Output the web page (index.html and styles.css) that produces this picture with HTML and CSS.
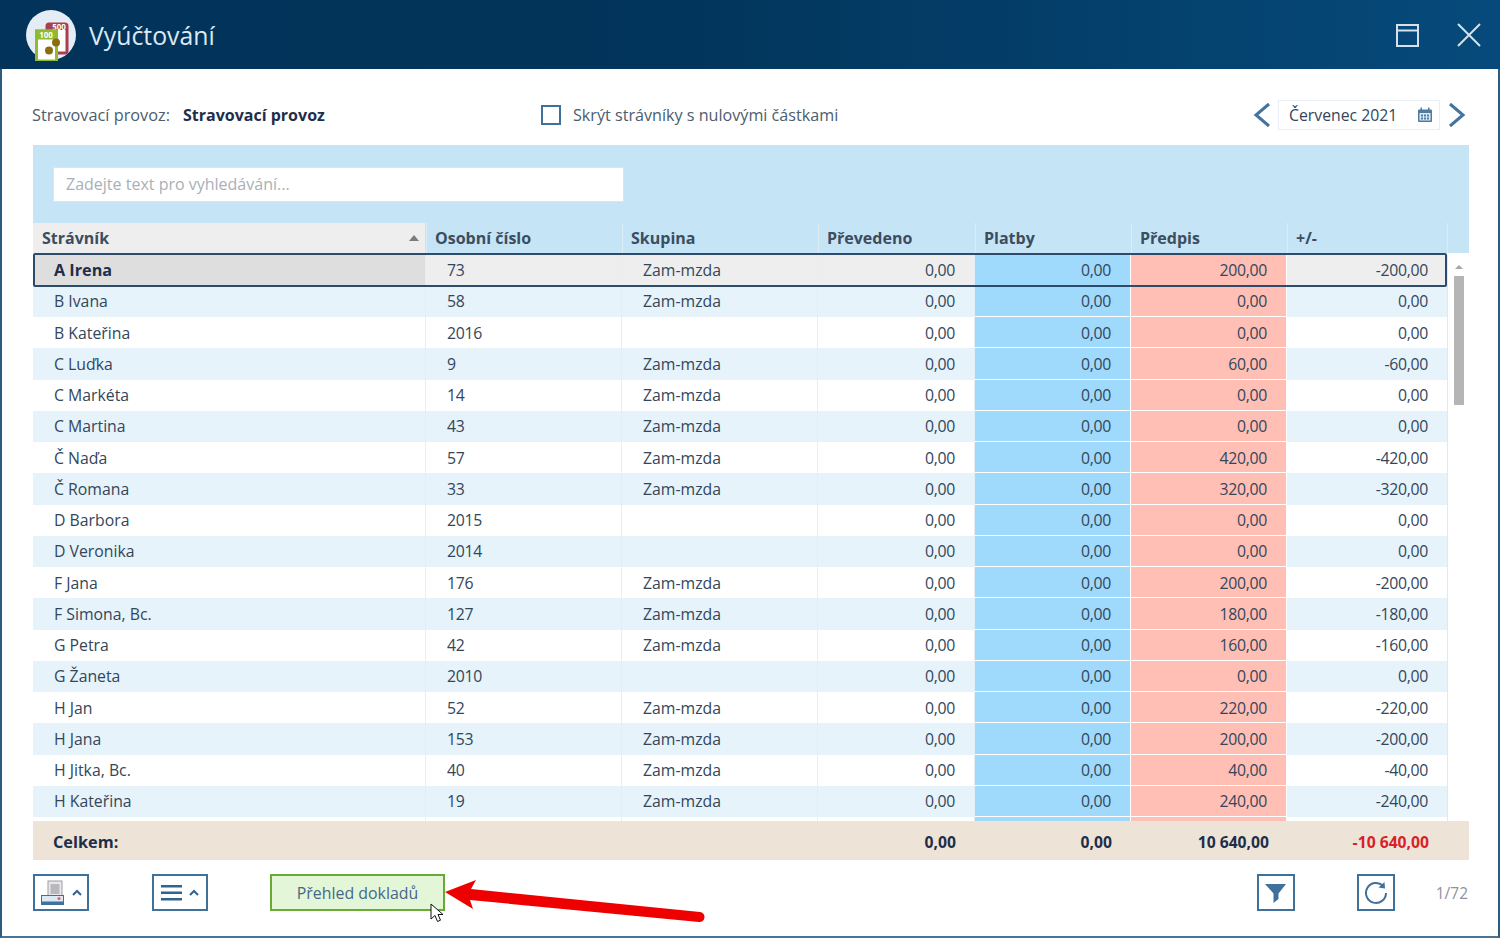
FILE: index.html
```html
<!DOCTYPE html>
<html lang="cs">
<head>
<meta charset="utf-8">
<title>Vyúčtování</title>
<link rel="stylesheet" href="styles.css">
</head>
<body>
<div class="window">
  <header class="titlebar">
    <svg class="logo" width="52" height="52" viewBox="0 0 52 52">
      <circle cx="26" cy="26" r="25" fill="#e4edf5"/>
      <rect x="22" y="15" width="20" height="29" rx="2" fill="#fff" stroke="#a83e4e" stroke-width="3"/>
      <rect x="22" y="14" width="20" height="7" fill="#a83e4e"/>
      <text x="34" y="20.500" class="logo-text">500</text>
      <rect x="11.500" y="22" width="20" height="30" fill="#fff" stroke="#8fbb2e" stroke-width="3"/>
      <rect x="10" y="20.500" width="23" height="10" fill="#8fbb2e"/>
      <text x="21" y="29" class="logo-text">100</text>
      <circle cx="31" cy="33.500" r="4" fill="#8a6d12"/>
      <circle cx="24" cy="41.500" r="4" fill="#8a6d12"/>
    </svg>
    <h1 class="title">Vyúčtování</h1>
    <div class="win-controls">
      <svg width="24" height="24" viewBox="0 0 24 24" fill="none" stroke="#d5e2ec" stroke-width="2"><rect x="2" y="2" width="21" height="21"/><path d="M2 7.500h21"/></svg>
      <svg width="26" height="26" viewBox="0 0 26 26" fill="none" stroke="#d5e2ec" stroke-width="2"><path d="M2 2l22 22M24 2L2 24"/></svg>
    </div>
  </header>

  <main class="content">
    <div class="toolbar">
      <div class="provoz"><span class="provoz-label">Stravovací provoz:</span><strong class="provoz-value">Stravovací provoz</strong></div>
      <label class="hide-zero"><span class="checkbox"></span>Skrýt strávníky s nulovými částkami</label>
      <div class="month">
        <svg width="18" height="26" viewBox="0 0 18 26" fill="none" stroke="#44749e" stroke-width="3"><path d="M16 2L3 13l13 11"/></svg>
        <div class="month-box">Červenec 2021
          <svg class="cal" width="16" height="16" viewBox="0 0 16 16"><rect x="1" y="2.500" width="14" height="12.500" rx="1" fill="#4d7ba3"/><rect x="3.500" y="0.500" width="1.500" height="3" fill="#4d7ba3"/><rect x="11" y="0.500" width="1.500" height="3" fill="#4d7ba3"/><rect x="2.500" y="6" width="11" height="7.500" fill="#dfe9f2"/><path d="M4 7.500h2v2H4zM7 7.500h2v2H7zM10 7.500h2v2h-2zM4 10.500h2v2H4zM7 10.500h2v2H7zM10 10.500h2v2h-2z" fill="#4d7ba3"/></svg>
        </div>
        <svg width="18" height="26" viewBox="0 0 18 26" fill="none" stroke="#44749e" stroke-width="3"><path d="M2 2l13 11L2 24"/></svg>
      </div>
    </div>

    <section class="panel">
      <div class="search-area"><input class="search" type="text" placeholder="Zadejte text pro vyhledávání..."></div>
      <div class="row head">
        <div class="hcell first">Strávník<span class="sort"></span></div>
        <div class="hcell">Osobní číslo</div>
        <div class="hcell">Skupina</div>
        <div class="hcell">Převedeno</div>
        <div class="hcell">Platby</div>
        <div class="hcell">Předpis</div>
        <div class="hcell">+/-</div>
        <div class="hcell last"></div>
      </div>
      <div class="body">
        <div class="rows">
          <div class="row selected"><div class="c name">A Irena</div><div class="c">73</div><div class="c">Zam-mzda</div><div class="c num">0,00</div><div class="c num pay">0,00</div><div class="c num due">200,00</div><div class="c num">-200,00</div></div>
          <div class="row"><div class="c name">B Ivana</div><div class="c">58</div><div class="c">Zam-mzda</div><div class="c num">0,00</div><div class="c num pay">0,00</div><div class="c num due">0,00</div><div class="c num">0,00</div></div>
          <div class="row"><div class="c name">B Kateřina</div><div class="c">2016</div><div class="c"></div><div class="c num">0,00</div><div class="c num pay">0,00</div><div class="c num due">0,00</div><div class="c num">0,00</div></div>
          <div class="row"><div class="c name">C Luďka</div><div class="c">9</div><div class="c">Zam-mzda</div><div class="c num">0,00</div><div class="c num pay">0,00</div><div class="c num due">60,00</div><div class="c num">-60,00</div></div>
          <div class="row"><div class="c name">C Markéta</div><div class="c">14</div><div class="c">Zam-mzda</div><div class="c num">0,00</div><div class="c num pay">0,00</div><div class="c num due">0,00</div><div class="c num">0,00</div></div>
          <div class="row"><div class="c name">C Martina</div><div class="c">43</div><div class="c">Zam-mzda</div><div class="c num">0,00</div><div class="c num pay">0,00</div><div class="c num due">0,00</div><div class="c num">0,00</div></div>
          <div class="row"><div class="c name">Č Naďa</div><div class="c">57</div><div class="c">Zam-mzda</div><div class="c num">0,00</div><div class="c num pay">0,00</div><div class="c num due">420,00</div><div class="c num">-420,00</div></div>
          <div class="row"><div class="c name">Č Romana</div><div class="c">33</div><div class="c">Zam-mzda</div><div class="c num">0,00</div><div class="c num pay">0,00</div><div class="c num due">320,00</div><div class="c num">-320,00</div></div>
          <div class="row"><div class="c name">D Barbora</div><div class="c">2015</div><div class="c"></div><div class="c num">0,00</div><div class="c num pay">0,00</div><div class="c num due">0,00</div><div class="c num">0,00</div></div>
          <div class="row"><div class="c name">D Veronika</div><div class="c">2014</div><div class="c"></div><div class="c num">0,00</div><div class="c num pay">0,00</div><div class="c num due">0,00</div><div class="c num">0,00</div></div>
          <div class="row"><div class="c name">F Jana</div><div class="c">176</div><div class="c">Zam-mzda</div><div class="c num">0,00</div><div class="c num pay">0,00</div><div class="c num due">200,00</div><div class="c num">-200,00</div></div>
          <div class="row"><div class="c name">F Simona, Bc.</div><div class="c">127</div><div class="c">Zam-mzda</div><div class="c num">0,00</div><div class="c num pay">0,00</div><div class="c num due">180,00</div><div class="c num">-180,00</div></div>
          <div class="row"><div class="c name">G Petra</div><div class="c">42</div><div class="c">Zam-mzda</div><div class="c num">0,00</div><div class="c num pay">0,00</div><div class="c num due">160,00</div><div class="c num">-160,00</div></div>
          <div class="row"><div class="c name">G Žaneta</div><div class="c">2010</div><div class="c"></div><div class="c num">0,00</div><div class="c num pay">0,00</div><div class="c num due">0,00</div><div class="c num">0,00</div></div>
          <div class="row"><div class="c name">H Jan</div><div class="c">52</div><div class="c">Zam-mzda</div><div class="c num">0,00</div><div class="c num pay">0,00</div><div class="c num due">220,00</div><div class="c num">-220,00</div></div>
          <div class="row"><div class="c name">H Jana</div><div class="c">153</div><div class="c">Zam-mzda</div><div class="c num">0,00</div><div class="c num pay">0,00</div><div class="c num due">200,00</div><div class="c num">-200,00</div></div>
          <div class="row"><div class="c name">H Jitka, Bc.</div><div class="c">40</div><div class="c">Zam-mzda</div><div class="c num">0,00</div><div class="c num pay">0,00</div><div class="c num due">40,00</div><div class="c num">-40,00</div></div>
          <div class="row"><div class="c name">H Kateřina</div><div class="c">19</div><div class="c">Zam-mzda</div><div class="c num">0,00</div><div class="c num pay">0,00</div><div class="c num due">240,00</div><div class="c num">-240,00</div></div>
          <div class="row"><div class="c name"></div><div class="c"></div><div class="c"></div><div class="c num"></div><div class="c num pay"></div><div class="c num due"></div><div class="c num"></div></div>
        </div>
        <div class="scrollbar"><span class="arrow-up"></span><span class="thumb"></span><span class="arrow-down"></span></div>
      </div>
      <div class="row totals">
        <div class="t total-label">Celkem:</div><div class="t"></div><div class="t"></div>
        <div class="t num tight">0,00</div><div class="t num tight">0,00</div><div class="t num">10 640,00</div><div class="t num neg">-10 640,00</div><div class="t"></div>
      </div>
    </section>

    <footer class="actions">
      <button class="icon-btn wide">
        <svg width="26" height="26" viewBox="0 0 26 26"><rect x="8" y="1" width="14" height="16" fill="#e8e8ea" stroke="#9c9ea4"/><rect x="10.500" y="4" width="9" height="10" fill="#b9b9bd"/><rect x="1.500" y="15.500" width="22" height="9" fill="#dbe9f4" stroke="#3f719b"/><rect x="1" y="21.500" width="23" height="3" fill="#3f719b"/><circle cx="19" cy="18.500" r="1.500" fill="#ef5b6b"/></svg>
        <svg width="10" height="7" viewBox="0 0 10 7" fill="none" stroke="#2f6390" stroke-width="2"><path d="M1 6l4-4 4 4"/></svg>
      </button>
      <button class="icon-btn wide">
        <svg width="22" height="18" viewBox="0 0 22 18" fill="#2f6390"><rect y="1" width="21" height="2.500"/><rect y="7.500" width="21" height="2.500"/><rect y="14" width="21" height="2.500"/></svg>
        <svg width="10" height="7" viewBox="0 0 10 7" fill="none" stroke="#2f6390" stroke-width="2"><path d="M1 6l4-4 4 4"/></svg>
      </button>
      <button class="green-btn">Přehled dokladů</button>
      <div class="spacer"></div>
      <button class="icon-btn">
        <svg width="22" height="22" viewBox="0 0 22 22" fill="#3f719b"><path d="M0 2h21l-7.500 9.500V17l-5 4V11.500z"/></svg>
      </button>
      <button class="icon-btn refresh">
        <svg width="24" height="24" viewBox="0 0 24 24" fill="none" stroke="#3f719b" stroke-width="2"><path d="M19 4.800A10 10 0 1 0 22 12"/><path d="M14.500 6.500L21 7.500 20.500 1z" fill="#3f719b" stroke="none"/></svg>
      </button>
      <span class="pager">1/72</span>
    </footer>
  </main>

  <svg class="pointer-arrow" width="280" height="60" viewBox="0 0 280 60">
    <path d="M1 22L32 10 27 19 256 42a5 5 0 0 1-1 10L26 30 29 39z" fill="#ee0000"/>
  </svg>
  <svg class="cursor" width="14" height="20" viewBox="0 0 14 20">
    <path d="M1 1v15l4-3.500 2.500 6 3-1.300-2.500-5.700h5z" fill="#fff" stroke="#111" stroke-width="1"/>
  </svg>
</div>
</body>
</html>
```
FILE: styles.css
```css
* { box-sizing: border-box; }
html, body { margin: 0; padding: 0; }
body {
  width: 1500px;
  height: 938px;
  overflow: hidden;
  background: #fff;
  font-family: "Open Sans", "Liberation Sans", sans-serif;
  font-size: 15.800px;
  color: #2c3e50;
}
.window {
  position: relative;
  width: 1500px;
  height: 938px;
  display: flex;
  flex-direction: column;
  border-left: 2px solid #2c5b80;
  border-right: 2px solid #2c5b80;
  border-bottom: 2px solid #4b7391;
}
.titlebar {
  height: 69px;
  margin: 0 -2px;
  flex: none;
  display: flex;
  align-items: center;
  padding: 0 18px 0 25px;
  background: linear-gradient(90deg, #02335a 0%, #02355b 45%, #064a7b 100%);
}
.logo { flex: none; }
.logo-text { font: 700 8px "Open Sans", sans-serif; fill: #fff; text-anchor: middle; }
.title {
  margin: 0 0 0 12px;
  font-size: 24.800px;
  font-weight: 400;
  color: #dce9f3;
}
.win-controls {
  margin-left: auto;
  display: flex;
  align-items: center;
  gap: 37px;
}
.content {
  flex: 1;
  min-height: 0;
  display: flex;
  flex-direction: column;
  padding: 0 29px 0 31px;
}
.toolbar {
  height: 76px;
  flex: none;
  display: flex;
  align-items: center;
  padding-top: 16px;
  position: relative;
}
.provoz { width: 508px; display: flex; flex: none; }
.provoz-label { width: 150px; font-size: 16.300px; color: #4c5d6d; margin-left: -1px; margin-right: 1px; }
.provoz-value { font-size: 16px; font-weight: 700; color: #1e2e4a; }
.hide-zero { display: flex; align-items: center; font-size: 16.150px; color: #4c5d6d; }
.checkbox {
  width: 20px;
  height: 20px;
  margin-right: 12px;
  border: 2px solid #3f719b;
  background: #fff;
}
.month { margin-left: auto; display: flex; align-items: center; gap: 7px; padding-right: 3px; }
.month-box {
  width: 162px;
  height: 30px;
  margin-right: 1px;
  display: flex;
  align-items: center;
  justify-content: space-between;
  padding: 0 6px 0 10px;
  border: 1px solid #e8eff6;
  color: #33465a;
}
.panel { width: 1436px; flex: none; background: #fff; }
.search-area { height: 78px; padding: 22px 20px; background: #c5e4f6; }
.search {
  display: block;
  width: 571px;
  height: 35px;
  padding: 0 12px 2px;
  border: 1px solid #d9e6ef;
  background: #fff;
  font: 16px "Open Sans", sans-serif;
  outline: none;
}
.search::placeholder { color: #a9b0b6; opacity: 1; }
.row {
  display: grid;
  grid-template-columns: 393px 196px 196px 157px 156px 156px 160px 22px;
}
.head { height: 30px; background: #c5e4f6; }
.hcell {
  display: flex;
  align-items: center;
  padding: 0 8px;
  font-weight: 700;
  font-size: 16px;
  color: #3b4d5f;
  border-left: 1px solid #dcecf7;
}
.hcell.first {
  position: relative;
  padding: 0 6px 0 9px;
  background: #eeeeee;
  border-left: 0;
  border-right: 1px solid #c5e4f6;
  justify-content: space-between;
}
.sort {
  width: 0;
  height: 0;
  border-left: 5px solid transparent;
  border-right: 5px solid transparent;
  border-bottom: 6px solid #7b7b7b;
}
.body { height: 568px; padding-top: 1.500px; display: grid; grid-template-columns: 1414px 22px; overflow: hidden; }
.rows { width: 1414px; }
.rows .row { grid-template-columns: 393px 196px 196px 157px 156px 156px 160px; height: 31.250px; }
.rows .row:nth-child(even) { background: #e6f3fb; }
.c {
  display: flex;
  align-items: center;
  padding: 0 0 0 21px;
  border-right: 1px solid #e3eef5;
  color: #33465a;
  white-space: nowrap;
}
.rows .row .c:last-child { border-right: 0; }
.rows .row .c:nth-child(2) { letter-spacing: -0.300px; }
.num { justify-content: flex-end; padding: 0 19px 0 0; letter-spacing: -0.300px; }
.pay { background: #9fd9fb; border-right-color: #fff; box-shadow: inset 0 -1px #fff; }
.due { background: #ffbfb5; border-right-color: #fff; box-shadow: inset 0 -1px #fff; }
.row.selected {
  position: relative;
  background: #eeeeee;
  z-index: 1;
}
.row.selected::after {
  content: "";
  position: absolute;
  inset: -1.500px 0 -1.250px 0;
  border: 2px solid #2d4b6b;
  border-radius: 2px;
  pointer-events: none;
}
.row.selected .name { background: #dedede; font-size: 16.200px; font-weight: 700; color: #1e2e4a; }
.scrollbar {
  position: relative;
  background: #fff;
  border-left: 1px solid #e3e8ee;
  display: flex;
  flex-direction: column;
  align-items: center;
}
.arrow-up {
  margin-top: 10px;
  width: 0;
  height: 0;
  border-left: 4px solid transparent;
  border-right: 4px solid transparent;
  border-bottom: 4px solid #a6a6a6;
}
.thumb { margin-top: 7px; width: 10px; height: 129px; background: #b5b5b5; }
.arrow-down {
  margin-top: auto;
  margin-bottom: 7px;
  width: 0;
  height: 0;
  border-left: 4px solid transparent;
  border-right: 4px solid transparent;
  border-top: 4px solid #a6a6a6;
}
.totals { height: 39px; padding-top: 1px; background: #ede4d7; font-weight: 700; color: #1e2e4a; border-top: 1px solid #e6e6e6; }
.t { display: flex; align-items: center; padding-left: 20px; white-space: nowrap; }
.total-label { font-size: 16.300px; }
.t.num { padding: 0 18px 0 0; justify-content: flex-end; font-size: 15.700px; letter-spacing: 0; }
.t.num.tight { padding-right: 19px; }
.t.neg { color: #d81f2a; }
.actions {
  flex: 1;
  display: flex;
  align-items: flex-start;
  padding-top: 14px;
}
.icon-btn {
  width: 38px;
  height: 37px;
  padding: 0;
  display: flex;
  align-items: center;
  justify-content: center;
  gap: 6px;
  background: #fff;
  border: 2px solid #3f719b;
}
.icon-btn.wide { width: 56px; margin-right: 63px; }
.icon-btn.wide + .icon-btn.wide { margin-right: 62px; }
.green-btn {
  width: 175px;
  height: 37px;
  padding: 0;
  border: 2px solid #69aa35;
  background: #e4f6d8;
  font: 15.900px "Open Sans", sans-serif;
  color: #44688a;
}
.spacer { flex: 1; }
.refresh { margin-left: 62px; }
.pager { margin-left: 41px; margin-right: 1px; font-size: 15.500px; line-height: 38px; color: #8c949c; }
.pointer-arrow { position: absolute; left: 442px; top: 870px; }
.cursor { position: absolute; left: 428px; top: 903px; }
```
